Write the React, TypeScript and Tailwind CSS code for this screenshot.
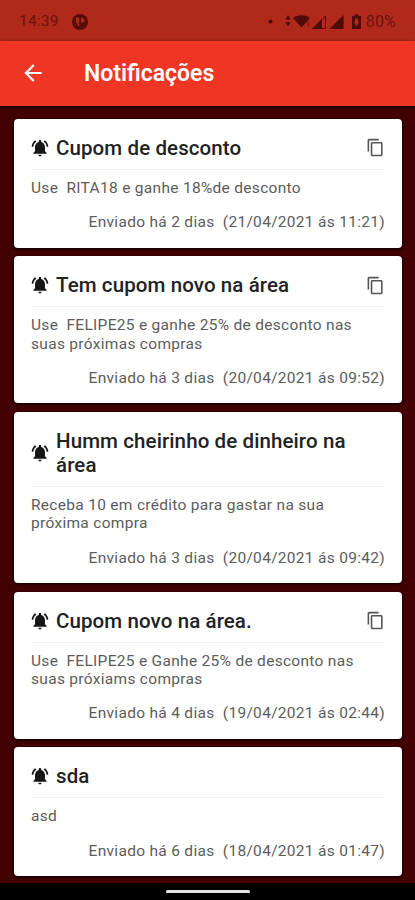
import { MdArrowBack, MdContentCopy, MdNotificationsActive } from "react-icons/md";

type Notification = {
  id: number;
  title: string;
  message: string;
  sentAt: string;
  copyable?: boolean;
};

const notifications: Notification[] = [
  {
    id: 1,
    title: "Cupom de desconto",
    message: "Use  RITA18 e ganhe 18%de desconto",
    sentAt: "Enviado há 2 dias  (21/04/2021 ás 11:21)",
    copyable: true,
  },
  {
    id: 2,
    title: "Tem cupom novo na área",
    message: "Use  FELIPE25 e ganhe 25% de desconto nas\nsuas próximas compras",
    sentAt: "Enviado há 3 dias  (20/04/2021 ás 09:52)",
    copyable: true,
  },
  {
    id: 3,
    title: "Humm cheirinho de dinheiro na\nárea",
    message: "Receba 10 em crédito para gastar na sua\npróxima compra",
    sentAt: "Enviado há 3 dias  (20/04/2021 ás 09:42)",
  },
  {
    id: 4,
    title: "Cupom novo na área.",
    message: "Use  FELIPE25 e Ganhe 25% de desconto nas\nsuas próxiams compras",
    sentAt: "Enviado há 4 dias  (19/04/2021 ás 02:44)",
    copyable: true,
  },
  {
    id: 5,
    title: "sda",
    message: "asd",
    sentAt: "Enviado há 6 dias  (18/04/2021 ás 01:47)",
  },
];

function StatusBar() {
  return (
    <div className="flex h-[41px] shrink-0 items-center bg-[#b0291b] pl-[19px] pr-[19px] pt-[2px] text-[#6b140c]">
      <span className="text-[15.5px] tracking-[0.2px]">14:39</span>
      <svg className="ml-[13px] h-4 w-4" viewBox="0 0 16 16">
        <circle cx="8" cy="8" r="8" fill="#560d08" />
        <path d="M4 3.500h3.200v9L5.500 11.500V9H4z" fill="#b0291b" />
        <path d="M9 4h1.200a2.200 2.200 0 0 1 0 4.600H9z" fill="#b0291b" />
      </svg>
      <svg className="ml-auto h-[18px] w-[96px]" viewBox="0 0 96 18" fill="#4f0b07">
        <circle cx="2.500" cy="8.600" r="2" />
        <path d="M20 2l2.600 4.500h-5.200zM20 13.500l2.600-4.500h-5.200z" />
        <path d="M25 5C29 1.300 38 1.300 42 5L33.500 14.500z" />
        <path d="M39.300 8.500h2v5h-2z" fill="#8a1a12" />
        <path d="M45 15.500L57.500 3v12.500z" fill="none" stroke="#4f0b07" />
        <path d="M44 16L54 6v10z" />
        <path d="M61.500 16L75.500 2v14z" />
        <path d="M84 3h2.500V1.500h4V3H93v13h-9z" />
        <path d="M87 5.500h3v3h1.300l-2.800 5-2.800-5H87z" fill="#b0291b" />
      </svg>
      <span className="ml-[2px] text-[16px] tracking-[0.2px]">80%</span>
    </div>
  );
}

function NotificationCard({ item }: { item: Notification }) {
  return (
    <article className="rounded-[4px] bg-white px-[17px] pb-[16.5px] pt-[16.7px] shadow-[0_1px_2px_1px_rgba(0,0,0,0.6)]">
      <div className="flex items-center border-b border-[#f1f1f1] pb-[9px]">
        <MdNotificationsActive className="-ml-px h-[20px] w-[20px] shrink-0 text-[#161616]" />
        <h2 className="ml-[6px] flex-1 whitespace-pre text-[20.5px] font-medium leading-[24.3px] tracking-[0.1px] text-[#222]">
          {item.title}
        </h2>
        {item.copyable ? <MdContentCopy className="h-[19px] w-[19px] shrink-0 text-[#555]" /> : null}
      </div>
      <p className="mt-[9px] whitespace-pre text-[15.5px] leading-[18.2px] tracking-[0.3px] text-[#5c5c5c]">
        {item.message}
      </p>
      <p className="mt-4 whitespace-pre text-right text-[15.5px] leading-[18.2px] tracking-[0.3px] text-[#5c5c5c]">
        {item.sentAt}
      </p>
    </article>
  );
}

export default function App() {
  return (
    <div className="flex h-[900px] w-[415px] flex-col overflow-hidden bg-[#410002] font-['Roboto',sans-serif]">
      <StatusBar />
      <header className="flex h-[64.5px] shrink-0 items-center bg-[#ef3524] pl-[20px] text-white shadow-[0_1px_3px_rgba(0,0,0,0.9)]">
        <MdArrowBack className="h-[26px] w-[26px]" />
        <h1 className="ml-[38px] pt-px text-[23px] font-semibold">Notificações</h1>
      </header>
      <main className="flex min-h-0 flex-1 flex-col gap-[8.5px] pl-[14px] pr-[13px] pt-[13.5px]">
        {notifications.map((item) => (
          <NotificationCard key={item.id} item={item} />
        ))}
      </main>
      <footer className="flex h-[17px] shrink-0 justify-center bg-black pt-[7px]">
        <div className="h-[3px] w-[84px] rounded-full bg-[#e4e4e4]" />
      </footer>
    </div>
  );
}
